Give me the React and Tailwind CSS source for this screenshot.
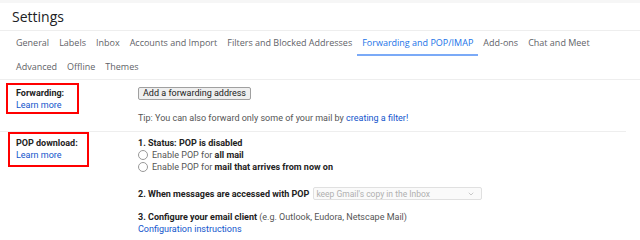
import { ChevronDown } from 'lucide-react';

const TABS_ROW1 = [
  'General',
  'Labels',
  'Inbox',
  'Accounts and Import',
  'Filters and Blocked Addresses',
  'Forwarding and POP/IMAP',
  'Add-ons',
  'Chat and Meet',
];
const TABS_ROW2 = ['Advanced', 'Offline', 'Themes'];
const ACTIVE = 'Forwarding and POP/IMAP';

function Tab({ label }) {
  const active = label === ACTIVE;
  return (
    <div
      className={`h-[24px] px-[5px] flex items-center whitespace-nowrap border-b-2 ${
        active ? 'text-[#1a73e8] border-[#7baaf7]' : 'text-[#5f6368] border-transparent'
      }`}
    >
      {label}
    </div>
  );
}

function Radio({ children }) {
  return (
    <div className="h-[12px] flex items-center gap-[4px] text-[#555] whitespace-nowrap">
      <span className="w-[10px] h-[10px] rounded-full border border-[#999] bg-white" />
      <span>{children}</span>
    </div>
  );
}

export default function App() {
  return (
    <div className="w-[640px] h-[240px] bg-white overflow-hidden font-['Roboto',Arial,sans-serif] text-[9px] leading-[12px] text-[#222]">
      {/* top strip */}
      <div className="h-[3px] bg-[#f6f6f6]" />

      {/* title */}
      <div className="h-[27px] pl-[12px] flex items-center text-[14px] text-[#202124] font-['Open_Sans',sans-serif]">
        Settings
      </div>
      <div className="h-px bg-[#eeeeee]" />

      {/* tabs */}
      <div className="pl-[11px] font-['Open_Sans',sans-serif] text-[9px]">
        <div className="flex h-[24px] pt-px">
          {TABS_ROW1.map((t) => <Tab key={t} label={t} />)}
        </div>
        <div className="flex h-[24px] pt-px">
          {TABS_ROW2.map((t) => <Tab key={t} label={t} />)}
        </div>
      </div>
      <div className="h-px bg-[#eeeeee]" />

      {/* Forwarding */}
      <div className="flex h-[52px] w-[626px] border-b border-[#eeeeee]">
        <div className="w-[138px] pl-[6px] pt-[3px]">
          <div className="w-[73px] h-[31px] border-2 border-[#ff0000] pl-[8px] pt-[2px]">
            <div className="font-bold">Forwarding:</div>
            <div className="text-[#1155cc]">Learn more</div>
          </div>
        </div>
        <div className="pt-[7px]">
          <button className="h-[13px] px-[4px] border border-[#a0a0a0] rounded-[2px] bg-[#efefef] text-[9px] leading-[11px] text-[#222]">
            Add a forwarding address
          </button>
          <div className="mt-[12px] text-[#555] whitespace-nowrap">
            Tip: You can also forward only some of your mail by{' '}
            <span className="text-[#1155cc]">creating a filter!</span>
          </div>
        </div>
      </div>

      {/* POP download */}
      <div className="flex">
        <div className="w-[138px] pl-[8px]">
          <div className="w-[81px] h-[35px] border-2 border-[#ff0000] pl-[6px] pt-[3px]">
            <div className="font-bold whitespace-nowrap">POP download:</div>
            <div className="text-[#1155cc]">Learn more</div>
          </div>
        </div>
        <div className="pt-[5px]">
          <div className="font-bold">1. Status: POP is disabled</div>
          <Radio>
            Enable POP for <b className="text-[#222]">all mail</b>
          </Radio>
          <Radio>
            Enable POP for <b className="text-[#222]">mail that arrives from now on</b>
          </Radio>

          <div className="mt-[14px] h-[13px] flex items-center gap-[4px] whitespace-nowrap">
            <span className="font-bold">2. When messages are accessed with POP</span>
            <div className="w-[169px] h-[13px] border border-[#e0e0e0] rounded-[2px] bg-[#fafafa] text-[#b0b0b0] flex items-center justify-between pl-[2px] pr-[6px] text-[8.5px]">
              <span>keep Gmail's copy in the Inbox</span>
              <ChevronDown size={8} color="#b0b0b0" />
            </div>
          </div>

          <div className="mt-[11px] whitespace-nowrap">
            <b>3. Configure your email client</b>{' '}
            <span className="text-[#555]">(e.g. Outlook, Eudora, Netscape Mail)</span>
          </div>
          <div className="text-[#1155cc]">Configuration instructions</div>
        </div>
      </div>
    </div>
  );
}
